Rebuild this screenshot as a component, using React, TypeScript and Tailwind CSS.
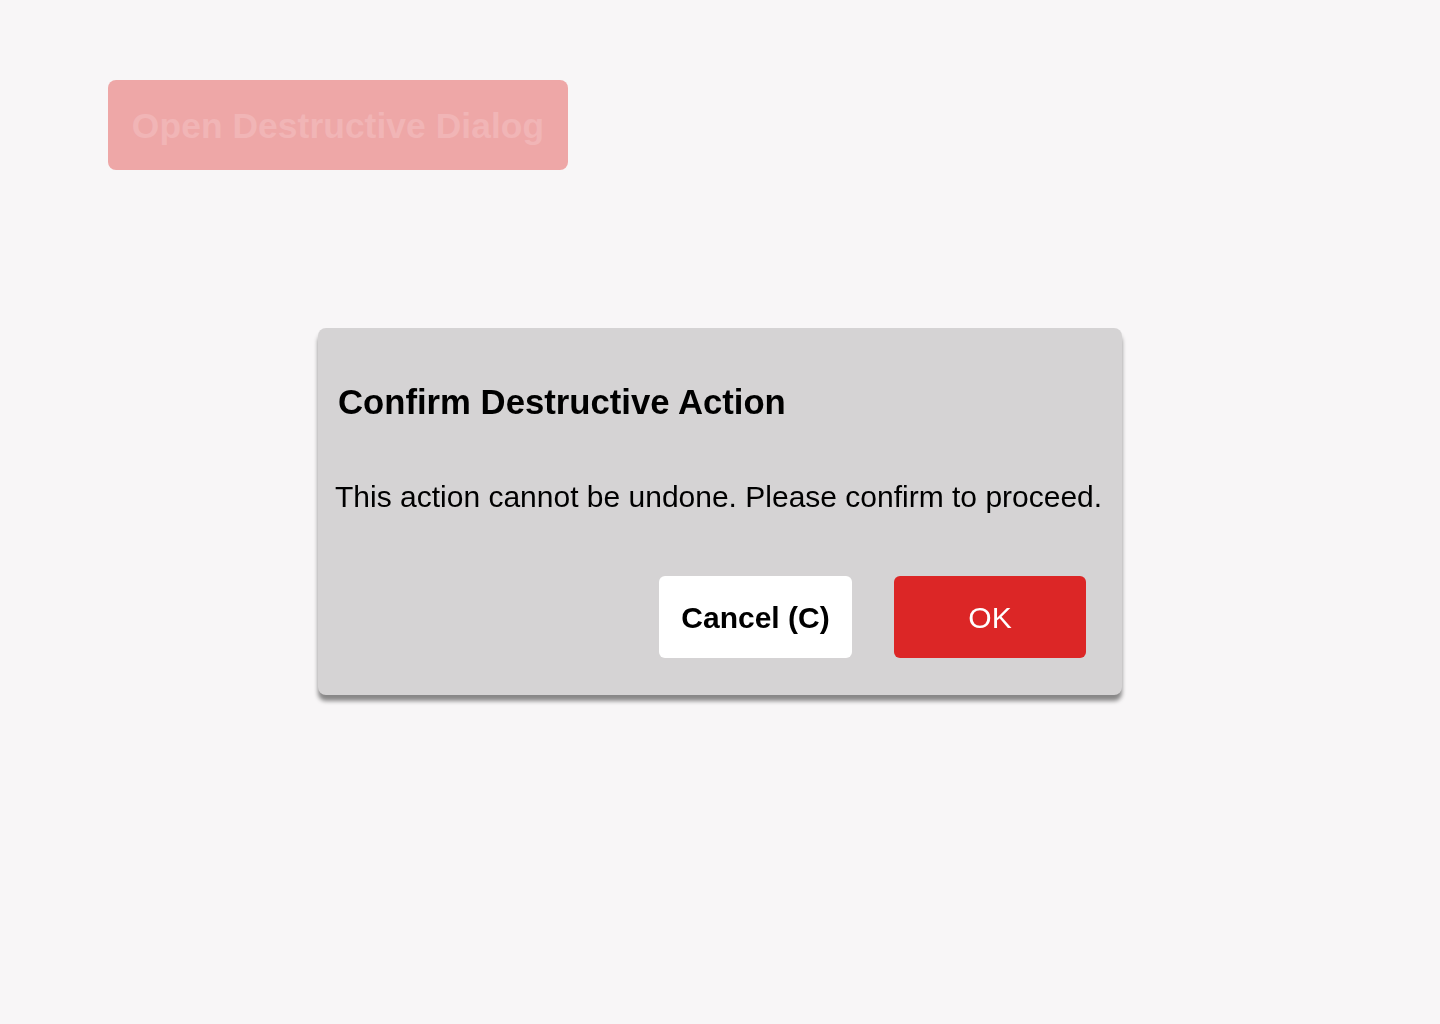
import { useState } from 'react';

export default function App() {
  const [open, setOpen] = useState(true);

  return (
    <div
      className="min-h-screen w-full bg-[#f8f6f7] pl-[108px] pt-[80px]"
      style={{ fontFamily: '"Liberation Sans", Arial, sans-serif' }}
    >
      <button
        className="flex h-[90px] w-[460px] items-center justify-center rounded-[8px] bg-[#eea7a7] pt-[4px] text-[35.5px] font-bold text-[#f1b5b6]"
        onClick={() => setOpen(true)}
      >
        Open Destructive Dialog
      </button>

      {open && (
        <div className="fixed inset-0 flex items-center justify-center pb-[1px]">
          <div className="flex h-[367px] w-[804px] flex-col rounded-[8px] bg-[#d5d3d4] pt-[54px] pb-[37px] shadow-[0_6px_4px_rgba(0,0,0,0.45)]">
            <h2 className="pl-[20px] text-[34.7px] leading-[40px] font-bold text-black">
              Confirm Destructive Action
            </h2>
            <p className="mt-[57px] px-[17px] text-[30px] leading-[36px] whitespace-nowrap text-black">
              This action cannot be undone. Please confirm to proceed.
            </p>
            <div className="mt-auto flex justify-end gap-[42px] pr-[36px]">
              <button
                className="flex h-[82px] w-[193px] items-center justify-center rounded-[6px] bg-white text-[30px] font-bold text-black"
                onClick={() => setOpen(false)}
              >
                Cancel (C)
              </button>
              <button
                className="flex h-[82px] w-[192px] items-center justify-center rounded-[6px] bg-[#dc2626] text-[30px] text-white"
                onClick={() => setOpen(false)}
              >
                OK
              </button>
            </div>
          </div>
        </div>
      )}
    </div>
  );
}
